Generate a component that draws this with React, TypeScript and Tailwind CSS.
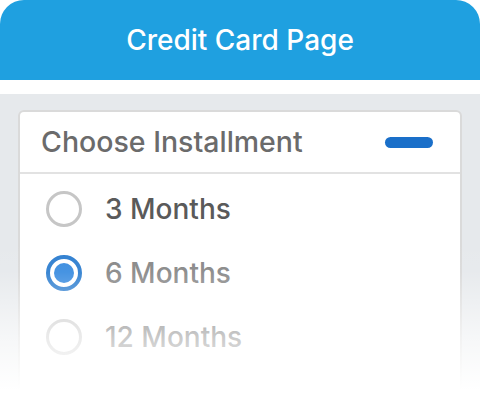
const options = [
  { label: '3 Months', checked: false, tone: 'text-[#5a5a5a]' },
  { label: '6 Months', checked: true, tone: 'text-[#888888]' },
  { label: '12 Months', checked: false, tone: 'text-[#6a6a6a]' },
]

function Radio({ checked }: { checked: boolean }) {
  if (checked) {
    return (
      <span className="flex h-[36px] w-[36px] shrink-0 items-center justify-center rounded-full border-[4px] border-[#2f7fd0] bg-white">
        <span className="h-[20px] w-[20px] rounded-full bg-[#3b8de0]" />
      </span>
    )
  }
  return <span className="h-[36px] w-[36px] shrink-0 rounded-full border-[3px] border-[#c6c6c6] bg-white" />
}

export default function App() {
  return (
    <div
      className="relative h-[400px] w-[480px] overflow-hidden bg-white"
      style={{ fontFamily: 'Inter, "Noto Sans", sans-serif' }}
    >
      <header className="flex h-[80px] items-center justify-center rounded-t-[24px] bg-[#1fa0e0]">
        <h1 className="text-[28px] font-medium text-white">Credit Card Page</h1>
      </header>
      <div className="mt-[14px] h-full bg-[#e6e9ec] px-[18px] pt-[16px]">
        <div className="rounded-[6px] border-2 border-[#dadada] bg-white pb-[60px]">
          <div className="flex h-[62px] items-center justify-between border-b-2 border-[#e2e2e2] pl-[21px] pr-[27px]">
            <span className="text-[28.5px] font-medium leading-none text-[#6b6b6b]">Choose Installment</span>
            <span className="h-[11px] w-[48px] rounded-full bg-[#1a6fc9]" />
          </div>
          <div className="flex flex-col pt-[3px]">
            {options.map((o) => (
              <label key={o.label} className="flex h-[64px] items-center gap-[23px] pl-[26px]">
                <Radio checked={o.checked} />
                <span className={`text-[28px] font-medium leading-none ${o.tone}`}>{o.label}</span>
              </label>
            ))}
          </div>
        </div>
      </div>
      <div className="pointer-events-none absolute bottom-0 left-0 h-[160px] w-full bg-[linear-gradient(to_bottom,rgba(255,255,255,0)_0%,rgba(255,255,255,0.06)_20%,rgba(255,255,255,0.66)_62%,#fff_94%)]" />
    </div>
  )
}
